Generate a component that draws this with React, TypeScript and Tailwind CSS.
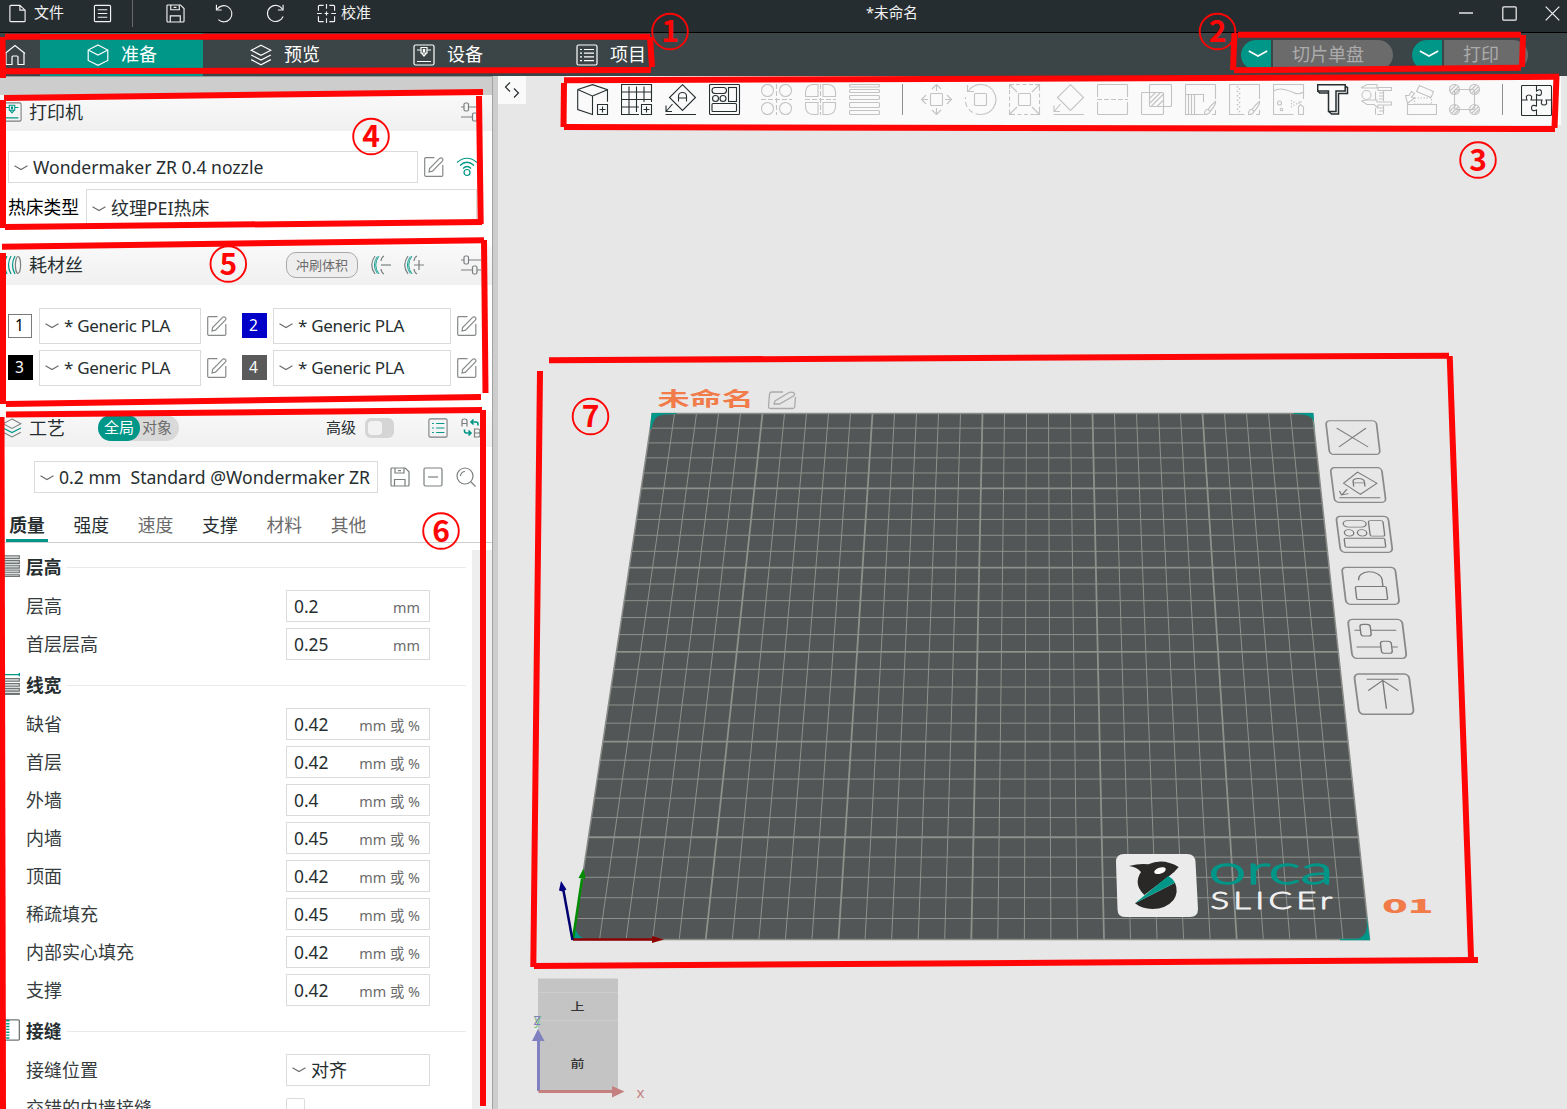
import React from "react";

type IconProps = { size?: number; box?: number; className?: string; children?: React.ReactNode };

function Icon({ size = 20, box = 20, className = "", children }: IconProps) {
  return (
    <svg
      width={size}
      height={size}
      viewBox={`0 0 ${box} ${box}`}
      fill="none"
      stroke="currentColor"
      strokeWidth={1.2}
      className={`shrink-0 ${className}`}
    >
      {children}
    </svg>
  );
}

function Caret({ className = "" }: { className?: string }) {
  return (
    <svg width="14" height="6" viewBox="0 0 14 6" fill="none" stroke="currentColor" className={`shrink-0 text-[#6b6b6b] ${className}`}>
      <path d="M.5 .8 L7 4.5 L13.5 .8" strokeWidth="1.1" />
    </svg>
  );
}

const EditIcon = () => (
  <Icon className="text-[#858989]">
    <path d="M10.500 .7H1.500A1 1 0 0 0 .7 1.500v17a1 1 0 0 0 .8.8h16.500a1 1 0 0 0 .8-.8V8" />
    <path d="M5 15l.6-3.500L15.600 1.400a1.800 1.800 0 0 1 2.700 0a1.800 1.800 0 0 1 0 2.700L8.500 14.200z" />
  </Icon>
);

const SaveShape = () => (
  <>
    <path d="M1 2a1 1 0 0 1 1-1h13.200l3.800 3.800V18a1 1 0 0 1-1 1H2a1 1 0 0 1-1-1z" />
    <path d="M5 1v5h9V1M4.500 19v-6.500h10.500V19M8 3.600h3" />
  </>
);

const SlidersIcon = () => (
  <Icon className="text-[#7a7f80]">
    <path d="M0 5h3M7.500 5H20M0 15h11.500M16 15h4" />
    <rect x="3" y="1" width="4.500" height="8" rx="1.500" />
    <rect x="11.500" y="11" width="4.500" height="8" rx="1.500" />
  </Icon>
);

const CubeShape = () => <path d="M11 1L20.800 6v10.500L11 21.300 1.200 16.500V6zM1.200 6L11 11l9.800-5" />;

const LayersShape = ({ accent = "currentColor" }: { accent?: string }) => (
  <>
    <path d="M11 1.200L20.800 6.300 11 11.400 1.200 6.300z" />
    <path d="M1.200 11L11 16l9.800-5" stroke={accent} />
    <path d="M1.200 15.600L11 20.800l9.800-5.200" />
  </>
);

const PrinterShape = ({ accent = "currentColor" }: { accent?: string }) => (
  <>
    <rect x="1" y="1" width="20" height="20" rx="1.500" />
    <g stroke={accent}>
      <path d="M4 6h4M14 6h4M4 17.500h14M8 3.500h6v5.500H8zM8.500 9L11 12l2.500-3" />
      <path d="M10.400 5.500h1.200v2h-1.200z" />
    </g>
  </>
);

const ListShape = ({ accent = "currentColor" }: { accent?: string }) => (
  <>
    <rect x="1" y="1" width="20" height="20" rx="1.500" />
    <g stroke={accent}>
      <path d="M4 5.500h2M8 5.500h10M4 9.200h2M8 9.200h10M4 12.900h2M8 12.900h10M4 16.600h2M8 16.600h10" />
    </g>
  </>
);

function TitleBar() {
  return (
    <div className="flex h-[33px] shrink-0 items-start border-b border-black bg-[#262d30] text-[15px] text-[#f2f2f2]">
      <div className="flex h-[26px] w-full items-center pl-[8px]">
        <Icon size={19}>
          <path d="M2 2.500a1 1 0 0 1 1-1h9.500l5.500 5v11a1 1 0 0 1-1 1H3a1 1 0 0 1-1-1zM12.500 1.500v5H18" />
        </Icon>
        <span className="ml-[7px] pb-[2px] leading-none">文件</span>
        <Icon size={19} className="ml-[29px]">
          <rect x="1.500" y="1.500" width="17" height="17" rx="1" />
          <path d="M5 6h10M5 10h10M5 14h10" />
        </Icon>
        <div className="ml-[20px] h-[28px] w-px bg-[#65696b]" />
        <Icon size={19} className="ml-[33px]"><SaveShape /></Icon>
        <Icon size={19} className="ml-[30px]">
          <path d="M1.500 .8v5.500H7" />
          <path d="M2 5.800A8.500 8.500 0 1 1 3.500 16.500" />
        </Icon>
        <Icon size={19} className="ml-[32px]">
          <path d="M18 .8v5.500h-5.500" />
          <path d="M17.500 5.800A8.500 8.500 0 1 0 18 13" />
        </Icon>
        <Icon size={19} className="ml-[32px]">
          <path d="M7 1.500H2.500a1 1 0 0 0-1 1V7M1.500 13v4.500a1 1 0 0 0 1 1H7M13 1.500h4.500a1 1 0 0 1 1 1V7M18.500 13v4.500a1 1 0 0 1-1 1H13M10 0v5M10 15v5M0 10h5M15 10h5M8 10h4M10 8v4" />
        </Icon>
        <span className="ml-[5px] pb-[2px] leading-none">校准</span>
        <span className="ml-[495px] pb-[2px] text-[14.600px] leading-none">*未命名</span>
        <div className="ml-auto flex items-center pr-[7px]">
          <Icon size={15} box={15}><path d="M1 7h14" strokeWidth="1.400" /></Icon>
          <Icon size={15} box={15} className="ml-[29px]"><rect x=".8" y=".8" width="13.400" height="13.400" rx="1" /></Icon>
          <Icon size={15} box={15} className="ml-[28px]"><path d="M.7 .7l13.600 13.600M14.300 .7L.7 14.300" /></Icon>
        </div>
      </div>
    </div>
  );
}

function NavTab({ label, active, children }: { label: string; active?: boolean; children: React.ReactNode }) {
  return (
    <div className={`flex h-full w-[163px] items-center pl-[47px] ${active ? "bg-[#009688]" : ""}`}>
      <Icon size={22} box={22}>{children}</Icon>
      <span className="ml-[12px] pb-[2px] text-[18px] leading-none">{label}</span>
    </div>
  );
}

function SplitButton({ label, width }: { label: string; width: string }) {
  return (
    <div className="flex h-[30px] gap-[2px]">
      <div className="flex w-[30px] items-center justify-center rounded-l-full bg-[#009688] pb-[2px] pl-[4px]">
        <svg width="20" height="8" viewBox="0 0 20 8" fill="none" stroke="white" strokeWidth="1.600"><path d="M.8 1L10 6 19.200 1" /></svg>
      </div>
      <div className={`flex items-center rounded-r-full bg-[#6b6b6b] pb-[2px] pl-[19px] text-[18px] leading-none text-[#acacac] ${width}`}>{label}</div>
    </div>
  );
}

function NavBar() {
  return (
    <div className="flex h-[43px] shrink-0 items-center bg-[#3b4446] text-white">
      <div className="w-[40px] pl-[4px]">
        <Icon size={22} box={22}>
          <path d="M1 9.500L11 1.500l10 8M2 9v11.500h6V13q0-1 1-1h4q1 0 1 1v7.500h6V9" />
        </Icon>
      </div>
      <NavTab label="准备" active><CubeShape /></NavTab>
      <NavTab label="预览"><LayersShape /></NavTab>
      <NavTab label="设备"><PrinterShape /></NavTab>
      <NavTab label="项目"><ListShape /></NavTab>
      <div className="ml-auto flex gap-[19px] pr-[39px]">
        <SplitButton label="切片单盘" width="w-[120px]" />
        <SplitButton label="打印" width="w-[84px]" />
      </div>
    </div>
  );
}

function SectionHeader({ title, icon, className, children }: { title: string; icon: React.ReactNode; className: string; children?: React.ReactNode }) {
  return (
    <div className={`flex shrink-0 items-center bg-linear-to-b from-[#f9f9f9] to-[#f0f0f0] pr-[11px] pl-[2px] text-[#262e30] ${className}`}>
      {icon}
      <span className="ml-[7px] text-[18px] leading-none">{title}</span>
      {children}
    </div>
  );
}

function Select({ text, className }: { text: string; className: string }) {
  return (
    <div className={`flex shrink-0 items-center border border-[#dbdbdb] bg-white pl-[5px] whitespace-pre text-[#262e30] ${className}`}>
      <Caret />
      <span className="ml-[5px] leading-none">{text}</span>
    </div>
  );
}

function Filament({ n, swatch, width }: { n: number; swatch: string; width: string }) {
  return (
    <>
      <div className="flex w-[25px] shrink-0 items-center">
        <div className={`flex items-center justify-center text-[15.500px] leading-none ${swatch}`}>{n}</div>
      </div>
      <Select text="* Generic PLA" className={`ml-[6px] h-[36px] pb-[1px] text-[17px] tracking-[-0.300px] ${width}`} />
      <div className="ml-[6px] pb-[1px]"><EditIcon /></div>
    </>
  );
}

function GroupTitle({ title, className, children }: { title: string; className: string; children: React.ReactNode }) {
  return (
    <div className={`flex shrink-0 items-center ${className}`}>
      <Icon size={22} box={20} className="-mt-[2px] -ml-[1px] text-[#6f7475]">{children}</Icon>
      <span className="ml-[5px] pt-[1px] text-[17.800px] leading-none font-bold text-[#262e30]">{title}</span>
      <div className="mr-[6px] ml-[5px] h-px flex-1 bg-[#eaeaea]" />
    </div>
  );
}

function Param({ label, value, unit }: { label: string; value: string; unit: string }) {
  return (
    <div className="flex h-[38px] shrink-0 items-center pl-[26px]">
      <span className="w-[260px] text-[18px] leading-none text-[#363c3e]">{label}</span>
      <div className="flex h-[32px] w-[144px] items-center justify-between border border-[#dbdbdb] pr-[9px] pl-[7px]">
        <span className="pt-[2px] text-[17.400px] leading-none text-[#262e30]">{value}</span>
        <span className="pt-[5px] text-[14.400px] leading-none text-[#6b6b6b]">{unit}</span>
      </div>
    </div>
  );
}

const layerHeightParams = [["层高", "0.2"], ["首层层高", "0.25"]];
const lineWidthParams = [
  ["缺省", "0.42"], ["首层", "0.42"], ["外墙", "0.4"], ["内墙", "0.45"],
  ["顶面", "0.42"], ["稀疏填充", "0.45"], ["内部实心填充", "0.42"], ["支撑", "0.42"],
];
const tabs = [
  { label: "质量", cls: "font-bold text-[#262e30]" },
  { label: "强度", cls: "text-[#262e30]" },
  { label: "速度", cls: "text-[#6b6b6b]" },
  { label: "支撑", cls: "text-[#262e30]" },
  { label: "材料", cls: "text-[#6b6b6b]" },
  { label: "其他", cls: "text-[#6b6b6b]" },
];

const SpoolIcon = ({ sign }: { sign?: string }) => (
  <Icon className="text-[#7a7f80]">
    {sign ? (
      <>
        <path d="M4 1Q-2.500 10 4 19" />
        <path d="M8 1Q1.500 10 8 19M6.300 1.500Q0.500 10 6.300 18.500" stroke="#009688" strokeWidth="0.900" />
        <path d="M13 1q-2.500 1-3 5M13 19q-2.500-1-3-5" />
        <path d={sign} />
      </>
    ) : (
      <>
        <path d="M5 1Q0 10 5 19M9 1Q4 10 9 19M13 1Q8 10 13 19" stroke="#009688" />
        <ellipse cx="16" cy="10" rx="2.600" ry="8.500" />
      </>
    )}
  </Icon>
);

function Sidebar() {
  return (
    <aside className="flex h-full w-[493px] shrink-0 flex-col overflow-hidden border-r border-[#a2a2a2] bg-white">
      <div className="h-[19px] shrink-0 border-t border-[#999] bg-[#cdcdcd]" />

      <SectionHeader title="打印机" className="h-[36px] pb-[2px]" icon={<Icon box={22} className="text-[#7a7f80]"><PrinterShape accent="#009688" /></Icon>}>
        <div className="ml-auto"><SlidersIcon /></div>
      </SectionHeader>
      <div className="mt-[20px] flex shrink-0 items-center pl-[8px]">
        <Select text="Wondermaker ZR 0.4 nozzle" className="h-[32px] w-[410px] pt-[2px] text-[17.600px]" />
        <div className="-mt-[1px] ml-[6px]"><EditIcon /></div>
        <Icon size={22} box={22} className="ml-[12px] text-[#009688]">
          <path d="M1 6.500Q11-2 21 6.500M4 9.500Q11 3 18 9.500M7 12.500Q11 8.500 15 12.500" />
          <circle cx="11" cy="16.500" r="3" />
        </Icon>
      </div>
      <div className="mt-[6px] flex shrink-0 items-center pl-[8px]">
        <span className="w-[78px] pt-[1px] text-[17.800px] leading-none text-black">热床类型</span>
        <Select text="纹理PEI热床" className="h-[36px] w-[391px] pt-[3px] text-[17.900px]" />
      </div>

      <SectionHeader title="耗材丝" className="mt-[21px] h-[39px] pb-[1px]" icon={<SpoolIcon />}>
        <div className="ml-[203px] flex h-[26px] w-[72px] items-center justify-center rounded-[10px] border border-[#a6a9aa] bg-[#eee] pt-[1px] text-[13px] leading-none text-[#6b6b6b]">冲刷体积</div>
        <div className="ml-[13px]"><SpoolIcon sign="M10 10h10" /></div>
        <div className="ml-[13px]"><SpoolIcon sign="M10 10h10M15 5v10" /></div>
        <div className="ml-auto"><SlidersIcon /></div>
      </SectionHeader>
      <div className="mt-[23px] flex shrink-0 flex-col gap-[6px] pl-[8px]">
        <div className="flex items-center">
          <Filament n={1} swatch="mb-[1px] h-[24px] w-[24px] border border-[#7a7a7a] bg-white pt-[1px] pr-[1px] text-black" width="w-[162px]" />
          <div className="w-[15px]" />
          <Filament n={2} swatch="mb-[1px] h-[25px] w-[25px] bg-[#0000c8] pt-[1px] pr-[2px] text-white" width="w-[178px]" />
        </div>
        <div className="flex items-center">
          <Filament n={3} swatch="mb-[1px] h-[25px] w-[25px] bg-black pt-[1px] pr-[2px] text-white" width="w-[162px]" />
          <div className="w-[15px]" />
          <Filament n={4} swatch="mb-[1px] h-[25px] w-[25px] bg-[#5a5a5a] pt-[1px] pr-[2px] text-white" width="w-[178px]" />
        </div>
      </div>

      <SectionHeader title="工艺" className="mt-[24px] h-[37px] pb-[2px]" icon={<Icon box={22} className="text-[#7a7f80]"><LayersShape accent="#009688" /></Icon>}>
        <div className="ml-[33px] flex h-[26px] w-[81px] items-center rounded-full bg-[#d9d9d9] text-[15px] leading-none text-[#6b6b6b]">
          <span className="flex h-[26px] w-[42px] items-center justify-center rounded-full bg-[#009688] text-white">全局</span>
          <span className="ml-[2px]">对象</span>
        </div>
        <span className="ml-[147px] text-[15px] leading-none">高级</span>
        <div className="ml-[9px] h-[20px] w-[29px] rounded-[6px] bg-[#d5d5d5] p-[3px]">
          <div className="h-[14px] w-[14px] rounded-[4px] bg-[#f2f2f2]" />
        </div>
        <Icon box={22} className="ml-auto text-[#7a7f80]">
          <rect x="1" y="1" width="20" height="20" rx="1.500" />
          <path d="M4.500 6h2M9 6h9M4.500 11h2M9 11h9M4.500 16h2M9 16h9" stroke="#009688" />
        </Icon>
        <Icon className="ml-[13px] text-[#7a7f80]">
          <path d="M1 8.500V3q0-2 2.500-2T6 3v5.500M1 5.500h5M13.500 11h4q1.500 0 1.500 2t-1.500 2h-4zm0 4h4q1.500 0 1.500 2t-1.500 2h-4z" />
          <path d="M17 7.500V6q0-2-2-2h-5M12.500 1.500L10 4l2.500 2.500M3.500 11.500V13q0 2 2 2h4M7.500 12.500L10 15l-2.500 2.500" stroke="#009688" strokeWidth="1.600" />
        </Icon>
      </SectionHeader>
      <div className="mt-[14px] flex shrink-0 items-center pl-[34px]">
        <Select text="0.2 mm  Standard @Wondermaker ZR" className="h-[32px] w-[344px] pt-[2px] text-[17.600px]" />
        <Icon className="-mt-[1px] ml-[12px] text-[#7a7f80]"><SaveShape /></Icon>
        <Icon className="-mt-[1px] ml-[13px] text-[#7a7f80]"><rect x="1" y="1" width="18" height="18" rx="1.500" /><path d="M5 10h10" /></Icon>
        <Icon className="-mt-[1px] ml-[13px] text-[#7a7f80]"><circle cx="9" cy="9" r="8" /><path d="M15 15l4.500 4.500M4.500 9A4.500 4.500 0 0 1 9 4.500" /></Icon>
      </div>
      <div className="mt-[14px] flex h-[36px] shrink-0 gap-[22.300px] border-b border-[#cecece] pl-[6px]">
        {tabs.map((t, i) => (
          <div key={t.label} className={`flex w-[42px] items-center justify-center border-b-3 pt-[6px] text-[17.800px] leading-none ${i === 0 ? "border-[#009688]" : "border-transparent"} ${t.cls}`}>
            {t.label}
          </div>
        ))}
      </div>

      <div className="flex min-h-0 flex-1">
        <div className="flex w-[472px] flex-col pt-[4px]">
          <GroupTitle title="层高" className="h-[40px]">
            <path d="M2 .7h16.500v2.600H2zM2 5h16.500v2.600H2zM2 9.300h16.500v2.600H2zM2 13.600h16.500v2.600H2zM2 18h16.500v1.500H2z" fill="#c9cccc" strokeWidth="1" />
          </GroupTitle>
          {layerHeightParams.map(([l, v]) => <Param key={l} label={l} value={v} unit="mm" />)}
          <GroupTitle title="线宽" className="h-[42px] pt-[2px]">
            <path d="M2 1.500h17M18.500 0v3" stroke="#009688" />
            <path d="M2 5h16.500v2.500H2zM2 9.500h16.500v2.500H2zM2 14h16.500v2.500H2zM2 18.500h16.500v1H2z" fill="#c9cccc" strokeWidth="1" />
          </GroupTitle>
          {lineWidthParams.map(([l, v]) => <Param key={l} label={l} value={v} unit="mm 或 %" />)}
          <GroupTitle title="接缝" className="h-[42px] pt-[2px]">
            <path d="M3 .8h14.500a1 1 0 0 1 1 1v16.400a1 1 0 0 1-1 1H3" />
            <path d="M8 1v18" stroke="#009688" strokeWidth="3" strokeDasharray="1.300 1.300" />
          </GroupTitle>
          <div className="flex h-[38px] shrink-0 items-center pl-[26px]">
            <span className="w-[260px] text-[18px] leading-none text-[#363c3e]">接缝位置</span>
            <Select text="对齐" className="h-[32px] w-[144px] text-[18px]" />
          </div>
          <div className="flex h-[38px] shrink-0 items-center pl-[26px]">
            <span className="w-[260px] text-[18px] leading-none text-[#363c3e]">交错的内墙接缝</span>
            <div className="h-[20px] w-[19px] rounded-[2px] border border-[#dbdbdb]" />
          </div>
        </div>
        <div className="mt-[7px] flex-1 bg-[#eee]" />
      </div>
    </aside>
  );
}

const Hatch = ({ x, y }: { x: number; y: number }) => (
  <>
    <circle cx={x} cy={y} r="5" />
    <path d={`M${x - 4.500} ${y + 1.500}l6-6M${x - 3} ${y + 4}l7-7M${x} ${y + 4.500}l4.500-4.500`} />
  </>
);

const brush = "M30.500 17.500q-5 4-7.500 8l2 2q4-4 5.500-8zM22.500 25.500q-3 0-3 5 4.500 0 5.500-3M27 30.500h3.500V26";

const primaryTools: React.ReactNode[] = [
  <><path d="M.7 5.500L15.500 .7l15 5v12M.7 5.500v20L15.500 30.500V12L.7 5.500M15.500 12l15-6.300" /><path d="M20.500 20.500h10v10h-10zM25.500 22.500v6M22.500 25.500h6" /></>,
  <><path d="M30.500 18V.5H.5v30H18M.5 8h30M.5 15.500h30M.5 23H18M8 2.500V30M15.500 2.500V28M23 2.500V18" /><path d="M20.500 20.500h10v10h-10zM25.500 22.500v6M22.500 25.500h6" /></>,
  <><path d="M17.500 .7L30.500 13.500 17.500 26.500 4.500 13.500zM.5 30.500h30.500M13.500 17.500V12a4 3.500 0 0 1 8 0v5.500M13.500 14h8M7.500 20L1.500 27M1 21.500v6h6" /></>,
  <><rect x=".5" y=".5" width="30" height="30" rx="1" /><rect x="3" y="3.500" width="14.500" height="6" rx="3" /><circle cx="6.500" cy="14.500" r="3" /><circle cx="14" cy="14.500" r="3" /><rect x="19.500" y="3.500" width="8" height="14" /><rect x="3" y="19.500" width="24.500" height="8" rx="1" /></>,
];

const arrangeTools: React.ReactNode[] = [
  <><circle cx="6.500" cy="6.500" r="6" /><circle cx="24.500" cy="6.500" r="6" /><circle cx="6.500" cy="24.500" r="6" /><circle cx="24.500" cy="24.500" r="6" /><path d="M0 15.500h31M15.500 0v31" strokeDasharray="5 2" /></>,
  <><path d="M13 .5v12H.5V8Q1 1 8 .5zM18 .5h5q7 .5 7.500 7.500v4.500H18zM13 30.500v-12H.5V23q.5 7 7.500 7.500zM18 30.500h5q7-.5 7.500-7.500v-4.500H18z" /><path d="M0 15.500h31M15.500 0v31" strokeDasharray="5 2" /></>,
  <><rect x=".5" y=".5" width="30" height="2.500" rx="1" /><rect x=".5" y="5.500" width="30" height="3" rx="1" /><rect x=".5" y="11.500" width="30" height="4" rx="1" /><rect x=".5" y="18.500" width="30" height="5" rx="1" /><rect x=".5" y="26.500" width="30" height="4" rx="1" /></>,
];

const editTools: { dark?: boolean; draw: React.ReactNode }[] = [
  { draw: <><rect x="9.500" y="9.500" width="12" height="12" rx="1" /><path d="M15.500 7V1M11 5l4.500-4.500L20 5M15.500 24v6M11 26l4.500 4.500L20 26M7 15.500H1M5 11L.5 15.500 5 20M24 15.500h6M26 11l4.500 4.500L26 20" /></> },
  { draw: <><rect x="9.500" y="9.500" width="12" height="12" rx="1" /><path d="M2.500 1v6.500H9M3.500 7A15 15 0 1 1 15.500 30.500" /><path d="M15.500 30.500A15 15 0 0 1 .5 13" strokeDasharray="5 3" /></> },
  { draw: <><rect x="9.500" y="9.500" width="12" height="12" rx="1" /><rect x=".5" y=".5" width="30" height="30" strokeDasharray="4 2.500" /><path d="M1 1l7 7M30 1l-7 7M1 30l7-7M30 30l-7-7M.5 5V.5H5M26 .5h4.500V5M.5 26v4.500H5M26 30.500h4.500V26" /></> },
  { draw: <path d="M17.500 .7L30.500 13.500 17.500 26.500 4.500 13.500zM.5 30.500H31M7.500 20L1.500 27M1 21.500v6h6" /> },
  { draw: <><path d="M.5 13V1.500a1 1 0 0 1 1-1h28a1 1 0 0 1 1 1V13M.5 18v11.500a1 1 0 0 0 1 1h28a1 1 0 0 0 1-1V18" /><path d="M0 15.500h31" strokeDasharray="5 2" /></> },
  { draw: <><rect x="8.500" y=".5" width="22" height="22" rx="1" /><rect x=".5" y="8.500" width="22" height="22" rx="1" /><path d="M9 14l5.500-5.500M9 19L19.500 8.500M10.500 22L22.500 10M16 22.500l6-6" /></> },
  { draw: <><path d="M30.500 15V.5H.5v30h18M18.500 18v-7.500H.5M3.500 10.500v20M6.500 10.500v20M9.500 10.500v20" /><path d={brush} /></> },
  { draw: <><path d="M30.500 15V.5H.5v30h15" /><path d="M8.500 2v27" strokeWidth="1.500" strokeDasharray="1.500 3" /><path d="M10.500 4.300v25" strokeWidth="1.500" strokeDasharray="1.500 3" /><path d={brush} /></> },
  { draw: <><path d="M30.500 15V.5H.5v30h20M.5 7q5-3 11-1.500t10 3.500 9-1" /><circle cx="6.500" cy="19" r="2" /><circle cx="8.500" cy="25.500" r="1.300" /><path d="M25.500 30.500V23l2-2.500L30.500 23v7.500zM26 20v-2h3" /><path d="M18.500 16v8M21 17.500v5M23.500 19v2" strokeDasharray="1.500 1.500" /></> },
  { dark: true, draw: <><path d="M.7 .7h27.500v6.300H19v20.500h-7.500V7H.7z" strokeWidth="1.500" /><path d="M28.500 2.500l2 1v6h-9v20.500h-7L12 27.500M.7 7l2 2h8.500" strokeWidth="1.500" /></> },
  { draw: <><path d="M.5 3.500L6 .5h10v3h14.500v3H17v-2.500H1zM.5 17l5-1h10.500V18h14.500v3H17v3L13 20.500H6z" /><circle cx="5.500" cy="11" r="4.500" /><path d="M14.500 7.500V16M22.500 7v10.500M14.500 24v6.500M22.500 21.500v9M18 9h4M18 12h4M18 15h4M18 24h4M18 27h4M16 30.500h5" /></> },
  { draw: <><path d="M14.500 1.500l14 6-2.500 6-14.500-6zM2.500 20.500h29v10h-29zM.5 11.500l2 8L9.500 14l-3-1 3-3.500-3-2-2.500 4z" /><path d="M9.500 14h17v6h-17z" strokeDasharray="1.500 1.500" /></> },
  { draw: <><rect x="5.500" y="5.500" width="20" height="20" rx="2" /><Hatch x={5.500} y={5.500} /><Hatch x={25.500} y={5.500} /><Hatch x={5.500} y={25.500} /><Hatch x={25.500} y={25.500} /></> },
];

function Tool({ dark, children }: { dark?: boolean; children: React.ReactNode }) {
  return (
    <div className={`w-[44px] shrink-0 ${dark ? "text-[#262e30]" : "text-[#c3c3c3]"}`}>
      <Icon size={32} box={32} className="[stroke-width:1.1]">{children}</Icon>
    </div>
  );
}

function Toolbar() {
  return (
    <div className="flex h-[49px] w-[995px] items-start overflow-hidden bg-[#fafafa] pt-[8px] pl-[11px]">
      {primaryTools.map((t, i) => <Tool key={i} dark>{t}</Tool>)}
      <div className="w-[8px] shrink-0" />
      {arrangeTools.map((t, i) => <Tool key={i}>{t}</Tool>)}
      <div className="mr-[18px] ml-[9px] h-[31px] w-px shrink-0 bg-[#909090]" />
      {editTools.map((t, i) => <Tool key={i} dark={t.dark}>{t.draw}</Tool>)}
      <div className="mr-[18px] ml-[9px] h-[31px] w-px shrink-0 bg-[#909090]" />
      <Tool dark>
        <rect x=".5" y="1.500" width="30" height="30" rx="1" />
        <path d="M15.500 1.500v5.500q5-3 5 1.500t-5 2v5.500M.5 16H6q-2-5 2-5t2 5h5.500M15.500 16v6q-5-2-5 2t5 2v5M15.500 16H21q-2 5 2 5t2-5h5.500" />
      </Tool>
    </div>
  );
}

// Perspective mapping of the 300 mm build plate, split in 30 cells of 10 mm.
const CELLS = 30;
const plate = { top: 413.5, bottom: 939.500, tl: 652.500, tr: 1312.500, bl: 573, br: 1369.500 };

function rowAt(i: number) {
  const wt = plate.tr - plate.tl;
  const wb = plate.br - plate.bl;
  const t = i / CELLS;
  const w = 1 / ((1 - t) / wt + t / wb);
  const f = (w - wt) / (wb - wt);
  return { y: plate.top + f * (plate.bottom - plate.top), x1: plate.tl + f * (plate.bl - plate.tl), x2: plate.tr + f * (plate.br - plate.tr) };
}

const lines = Array.from({ length: CELLS - 1 }, (_, i) => i + 1);

const plateButtons: { at: [number, number]; w: number; h: number; skew: number; draw: React.ReactNode }[] = [
  { at: [1325.700, 420.700], w: 50.500, h: 33.700, skew: 4, draw: <path d="M20 22L78 78M78 22L20 78" /> },
  { at: [1330.300, 467.700], w: 51.200, h: 34.600, skew: 4.500, draw: <path d="M52 13L87 45 52 77 22 45zM10 87h80M41 54V40q0-9 11-9t11 9v14M41 44h22M27 62L16 78M12 67l3 12 14-4" /> },
  { at: [1336, 516.300], w: 52, h: 36, skew: 4.700, draw: <><rect x="12" y="12" width="44" height="18" rx="9" /><circle cx="21" cy="46" r="9" /><circle cx="46" cy="46" r="9" /><rect x="61" y="12" width="28" height="43" rx="4" /><rect x="10" y="61" width="78" height="25" rx="3" /></> },
  { at: [1341.700, 567.300], w: 53.300, h: 37, skew: 4.500, draw: <><rect x="21" y="52" width="58" height="35" rx="3" /><path d="M29 35a22 22 0 0 1 44-2v19" /></> },
  { at: [1347.700, 619.300], w: 54.200, h: 39, skew: 4.800, draw: <><path d="M10 28h11M40 28h47M10 71h45M76 71h10" /><rect x="21" y="13" width="19" height="30" rx="6" /><rect x="55" y="56" width="20" height="31" rx="6" /></> },
  { at: [1354, 674], w: 54.700, h: 40.300, skew: 5.300, draw: <path d="M22 13h58M51 16v70M22 41L51 16 77 41" /> },
];

function Scene() {
  return (
    <svg width="1069" height="1033" viewBox="498 76 1069 1033" className="absolute top-0 left-0 font-['Noto_Sans_CJK_SC',sans-serif]">
      <polygon points="652.500,413.500 1312.500,413.500 1369.500,939.500 573,939.500" fill="#525656" stroke="#8a8c88" strokeWidth="1.500" />
      <g stroke="#8e918b">
        {lines.map((i) => {
          const t = i / CELLS;
          return <line key={i} x1={plate.tl + t * (plate.tr - plate.tl)} y1={plate.top} x2={plate.bl + t * (plate.br - plate.bl)} y2={plate.bottom} strokeWidth={i % 5 === 0 ? 1.800 : 1} />;
        })}
        {lines.map((i) => {
          const r = rowAt(i);
          return <line key={i} x1={r.x1} y1={r.y} x2={r.x2} y2={r.y} strokeWidth={i % 5 === 0 ? 1.800 : 1} />;
        })}
      </g>
      <g fill="#009688">
        <path d="M651.500 413h25v1q-13 0-18 2t-7 13h-1.500z" />
        <path d="M1313.500 413h-20v1q14 0 18 4t3 12z" />
        <path d="M1370 940.200h-30v-1.500h16q10-1 11-12l-.5-12z" />
        <path d="M573 939.500l2-12q2 8 8 10.500v1.500z" />
      </g>

      <text transform="translate(657.500 406) scale(1.620 1)" fontSize="19" fontWeight="700" fill="#f27b4a" textLength="59.500" lengthAdjust="spacingAndGlyphs">未命名</text>
      <g fill="none" stroke="#aaa" strokeWidth="1.300">
        <path d="M783 392h-11q-2 0-2.500 2l-1 13q0 1.500 2 1.500h22q2 0 2.200-1.500l.8-10" />
        <path d="M774 404l1-3 14-8.500q3-1 5.500 1 .5 1.500-1 2.500l-14 8z" />
      </g>
      <text transform="translate(1382 912.500) scale(2.250 1)" fontSize="19" fontWeight="900" fill="#f27b4a" textLength="23" lengthAdjust="spacingAndGlyphs">01</text>

      {plateButtons.map((b, i) => (
        <g key={i} transform={`matrix(${b.w / 100} 0 ${b.skew / 100} ${b.h / 100} ${b.at[0]} ${b.at[1]})`} fill="none" stroke="#7a7a7a" strokeWidth="2.600">
          <rect x="0" y="0" width="100" height="100" rx="8" ry="11" strokeWidth="3.400" stroke="#8a8a8a" />
          {b.draw}
        </g>
      ))}

      <path d="M1124 854h63q8 0 8.500 8l2.500 47q0 8-8 8h-65q-7.500 0-7.500-8l-1.500-47q0-8 8-8z" fill="#ebebeb" />
      <path d="M1129 866Q1140 863 1148.300 864.300Q1163 857.500 1178.700 867Q1174 873 1168.300 876.700L1144.300 895Q1133 884 1141 872Q1137 867 1129 866z" fill="#2a2826" />
      <path d="M1135 903.300L1175 882.700Q1179 892 1173.500 900Q1166 909 1152.300 909Q1142 909 1135 903.300z" fill="#2a2826" />
      <path d="M1135 903.300L1168.300 876Q1173 878.500 1175 882.700z" fill="#009688" />
      <ellipse cx="1160" cy="870.700" rx="6" ry="3" transform="rotate(-18 1160 870.700)" fill="white" />
      <text transform="translate(1208.500 884) scale(1.600 1)" fontSize="40" fontWeight="300" fill="#009688" stroke="#009688" strokeWidth="1.300" strokeLinejoin="round" textLength="78" lengthAdjust="spacingAndGlyphs" className="font-['Lato',sans-serif]">orca</text>
      <text transform="translate(1210.500 909) scale(1.450 1)" fontSize="24" fontWeight="300" fill="#f0f0f0" stroke="#f0f0f0" strokeWidth="0.900" strokeLinejoin="round" textLength="84" lengthAdjust="spacing" className="font-['Lato',sans-serif]">SLICEr</text>

      <g strokeWidth="2.500">
        <path d="M573 939l9-60" stroke="#008c00" />
        <path d="M578.500 878l5-9.500 2 10.500z" fill="#008c00" />
        <path d="M573 939.500h82" stroke="#8c0000" />
        <path d="M652 936l12 3.500-12 3.500z" fill="#8c0000" />
        <path d="M572.500 940l-9.500-52" stroke="#00006e" />
        <path d="M559 890.500l2-9.500 5.500 8.500-4 2z" fill="#000080" />
      </g>

      <rect x="538" y="978.500" width="80" height="113" fill="#c4c4c4" />
      <path d="M538 992.500h80M538 1020.500h80" stroke="#cdcdcd" />
      <g fill="#333" fontSize="14" fontWeight="500" textAnchor="middle">
        <text transform="translate(577.500 1011) scale(1 .82)">上</text>
        <text transform="translate(577.500 1067.500) scale(1 .82)">前</text>
      </g>
      <path d="M538.500 1091v-52" stroke="#8080c0" strokeWidth="3" />
      <path d="M532 1041l6-12 6.500 12z" fill="#8080c0" />
      <path d="M538.500 1091.500h75" stroke="#c47f7f" strokeWidth="3" />
      <path d="M612 1086l12.500 5.500-12.500 6z" fill="#c47f7f" />
      <g fontSize="14" className="font-['Noto_Sans',sans-serif]">
        <text x="534" y="1024" fill="#80c080">y</text>
        <text x="533.500" y="1025" fontSize="12.500" fill="#8080c0">Z</text>
        <text x="636.500" y="1097.500" fill="#c47f7f" fontSize="15">x</text>
      </g>
    </svg>
  );
}

const strokes: [number, number, number, number][] = [
  [5, 36.700, 650, 36.700], [2.500, 37, 3, 78], [5, 71.300, 651, 70], [650, 37, 652, 67],
  [1238, 34.800, 1521, 34.800], [1234.500, 33, 1233, 70], [1234, 70.300, 1521, 67.800], [1523, 35, 1522, 67],
  [564, 80.300, 1559, 76.800], [564, 83, 563.500, 127], [564, 127, 1555, 129], [1556.500, 76, 1554.500, 128],
  [4, 98, 483, 92], [3, 100, 3, 228], [5, 227, 482, 222], [479, 96, 480.700, 224],
  [2, 246.700, 484, 240.300], [3, 253, 3, 404], [6, 404, 481, 397], [484, 240, 485.500, 393],
  [6, 414.500, 482, 410], [1.500, 417, 3, 1109], [483, 410, 483, 1106],
  [549, 360.200, 1449, 355.700], [540, 371, 533.300, 967], [534, 966, 1478, 960], [1449.700, 356, 1471, 957],
];
const marks: [number, number, number][] = [
  [1, 670, 31.500], [2, 1217.500, 31.500], [3, 1478, 160], [4, 371, 136.500], [5, 228.300, 264], [6, 441, 531], [7, 590.500, 416.500],
];

function Annotations() {
  return (
    <svg width="1567" height="1109" viewBox="0 0 1567 1109" className="pointer-events-none absolute top-0 left-0 font-['Noto_Sans_CJK_SC',sans-serif]">
      {strokes.map(([x1, y1, x2, y2], i) => <line key={i} x1={x1} y1={y1} x2={x2} y2={y2} stroke="#ff0505" strokeWidth="6" />)}
      {marks.map(([n, x, y]) => (
        <g key={n}>
          <circle cx={x} cy={y} r="17.800" fill="none" stroke="#ff0505" strokeWidth="1.900" />
          <text x={x} y={y + 10.500} textAnchor="middle" fontSize="30" fontWeight="700" fill="#ff0505">{n}</text>
        </g>
      ))}
    </svg>
  );
}

export default function App() {
  return (
    <div className="relative flex h-[1109px] w-[1567px] flex-col overflow-hidden bg-[#e7e7e7] font-['Noto_Sans','Noto_Sans_CJK_SC',sans-serif]">
      <TitleBar />
      <NavBar />
      <div className="flex min-h-0 flex-1">
        <Sidebar />
        <div className="w-[5px] shrink-0 bg-[#cdcdcd]" />
        <main className="relative flex flex-1 items-start">
          <Scene />
          <div className="relative mr-[40px] flex h-[28px] w-[28px] shrink-0 items-center justify-center bg-[#fafafa] text-[#262e30]">
            <Icon size={16} box={16}><path d="M6 .5L1.500 5 6 9.500M10 6.500l4.500 4.500-4.500 4.500" /></Icon>
          </div>
          <div className="relative"><Toolbar /></div>
        </main>
      </div>
      <Annotations />
    </div>
  );
}
